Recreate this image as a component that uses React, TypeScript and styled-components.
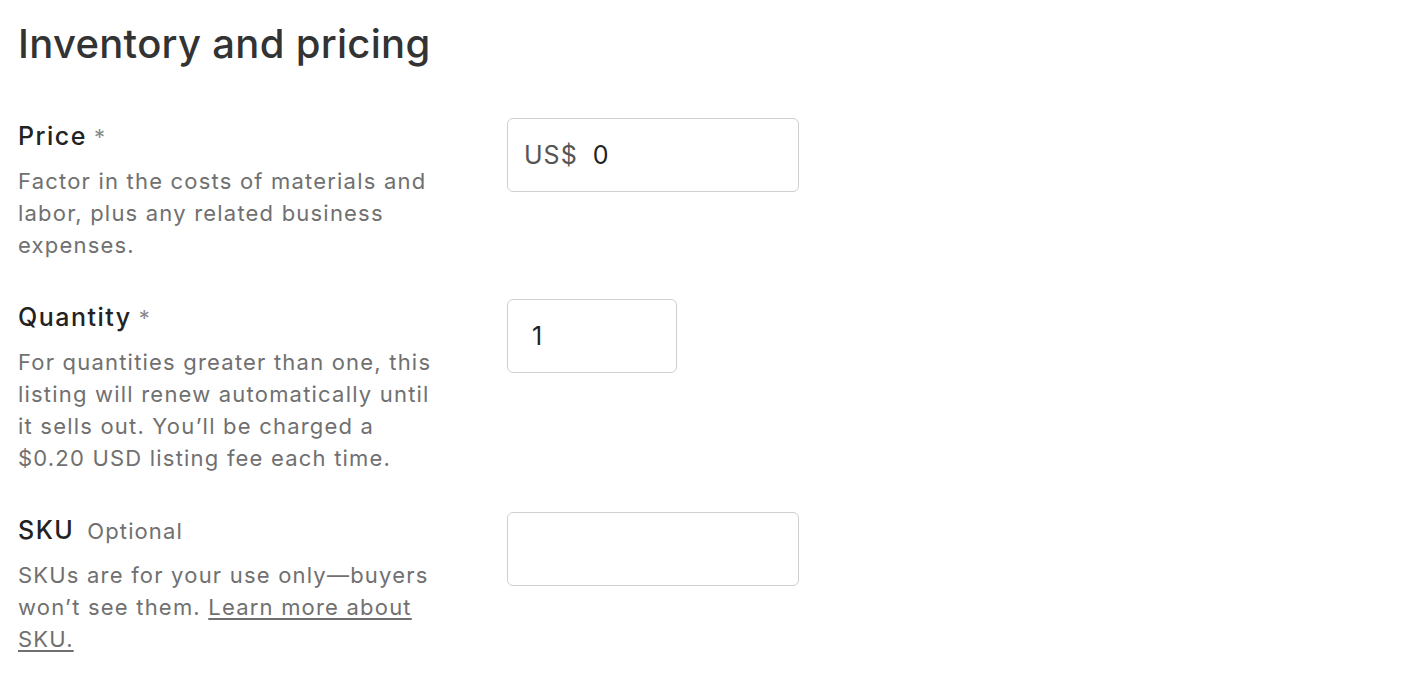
import React from "react";
import styled, { createGlobalStyle } from "styled-components";

const Global = createGlobalStyle`
  html, body { margin: 0; padding: 0; background: #fff; }
  body { font-family: Inter, "Noto Sans", "Liberation Sans", sans-serif; }
`;

const Page = styled.div`
  padding: 20px 18px 0 18px;
  color: #222;
`;

const Title = styled.h2`
  margin: 0 0 50px 0;
  font-size: 40px;
  line-height: 48px;
  font-weight: 500;
  letter-spacing: 0.3px;
  color: #333;
`;

const Row = styled.div`
  display: grid;
  grid-template-columns: 418px 292px;
  column-gap: 71px;
  align-items: start;
  margin-bottom: 38px;
`;

const Info = styled.div`
  display: flex;
  flex-direction: column;
  gap: 10px;
`;

const Label = styled.div`
  font-size: 25px;
  line-height: 36px;
  font-weight: 500;
  letter-spacing: 1.5px;
  color: #222;
`;

const Mark = styled.span`
  color: #8a8a8a;
  font-weight: 400;
  font-size: 22px;
  margin-left: 7px;
`;

const Optional = styled.span`
  color: #707070;
  font-weight: 400;
  font-size: 22px;
  letter-spacing: 1.1px;
  margin-left: 13px;
`;

const Desc = styled.p`
  margin: 0;
  font-size: 22px;
  line-height: 32px;
  letter-spacing: 1.2px;
  color: #707070;
`;

const Link = styled.a`
  color: #707070;
  text-decoration: underline;
  text-decoration-thickness: 1.5px;
  text-underline-offset: 3px;
`;

const Field = styled.div<{ $w: number; $pad?: number }>`
  width: ${(p) => p.$w}px;
  height: 74px;
  box-sizing: border-box;
  border: 1.5px solid #cfcfcf;
  border-radius: 6px;
  display: flex;
  align-items: center;
  padding: 0 0 0 ${(p) => p.$pad ?? 16}px;
  gap: 15px;
  font-size: 25px;
  letter-spacing: 1px;
  color: #333;
`;

const Prefix = styled.span`
  color: #555;
`;

const Value = styled.span`
  color: #222;
`;

export default function App() {
  return (
    <>
      <Global />
      <Page>
        <Title>Inventory and pricing</Title>
        <Row>
          <Info>
            <Label>
              Price<Mark>*</Mark>
            </Label>
            <Desc>
              Factor in the costs of materials and labor, plus any related business expenses.
            </Desc>
          </Info>
          <Field $w={292}>
            <Prefix>US$</Prefix>
            <Value>0</Value>
          </Field>
        </Row>
        <Row>
          <Info>
            <Label>
              Quantity<Mark>*</Mark>
            </Label>
            <Desc>
              For quantities greater than one, this listing will renew automatically until it sells out. You’ll be charged a $0.20 USD listing fee each time.
            </Desc>
          </Info>
          <Field $w={170} $pad={24}>
            <Value>1</Value>
          </Field>
        </Row>
        <Row>
          <Info>
            <Label>
              SKU<Optional>Optional</Optional>
            </Label>
            <Desc>
              SKUs are for your use only—buyers won’t see them. <Link href="#">Learn more about SKU.</Link>
            </Desc>
          </Info>
          <Field $w={292} />
        </Row>
      </Page>
    </>
  );
}
